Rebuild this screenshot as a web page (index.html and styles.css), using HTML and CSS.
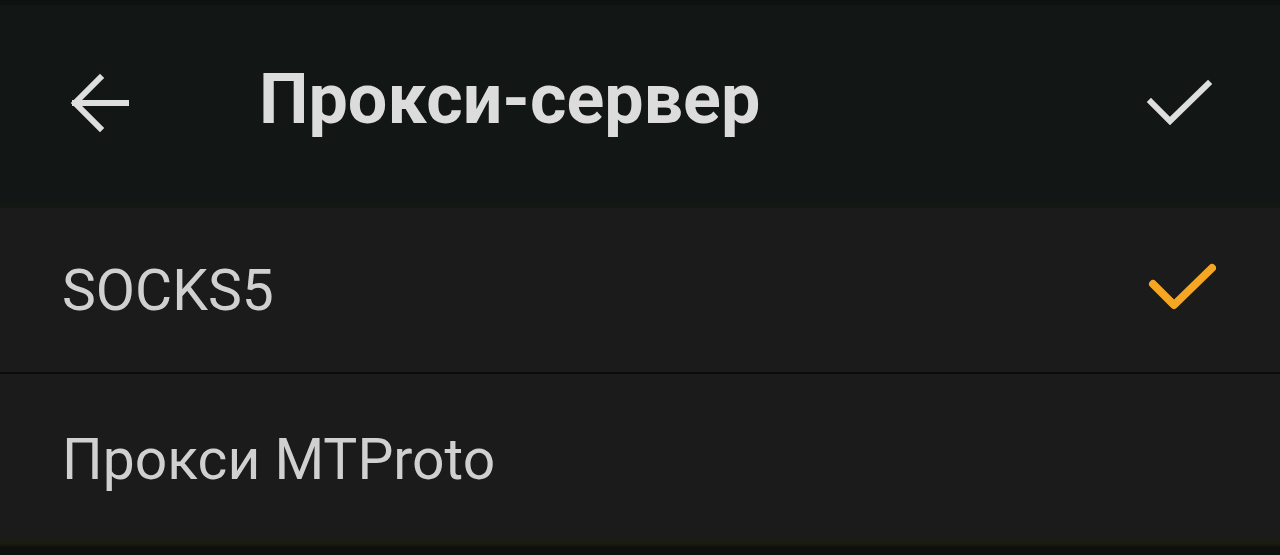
FILE: index.html
```html
<!DOCTYPE html>
<html lang="ru">
<head>
    <meta charset="UTF-8">
    <meta name="viewport" content="width=device-width, initial-scale=1.0">
    <title>Прокси-сервер</title>
    <link rel="stylesheet" href="styles.css">
</head>
<body>
    <div class="status-strip"></div>
    <header class="toolbar">
        <button class="icon-btn back" aria-label="Назад">
            <svg width="60" height="60" viewBox="0 0 60 60">
                <path d="M57 30H6M31 5L6 30l25 25" fill="none" stroke="#dedede" stroke-width="6" stroke-linecap="square"/>
            </svg>
        </button>
        <h1 class="title">Прокси-сервер</h1>
        <button class="icon-btn done" aria-label="Готово">
            <svg width="66" height="50" viewBox="0 0 66 50">
                <path d="M5 24l19 19L62 6" fill="none" stroke="#dedede" stroke-width="6" stroke-linecap="square"/>
            </svg>
        </button>
    </header>

    <ul class="options">
        <li class="option selected">
            <span class="option-label">SOCKS5</span>
            <svg class="tick" width="68" height="52" viewBox="0 0 68 52">
                <path d="M5 22l21 21L64 6" fill="none" stroke="#f5a623" stroke-width="8" stroke-linecap="round" stroke-linejoin="round"/>
            </svg>
        </li>
        <li class="option">
            <span class="option-label">Прокси MTProto</span>
        </li>
    </ul>
    <div class="nav-strip"></div>
</body>
</html>
```

FILE: styles.css
```css
body {
    margin: 0;
    height: 555px;
    overflow: hidden;
    background-color: #1b1b1b;
    font-family: Roboto, "Liberation Sans", sans-serif;
}
.status-strip {
    height: 5px;
    background-color: #0d1211;
}
.toolbar {
    height: 203px;
    display: flex;
    align-items: center;
    background: linear-gradient(#121716 0, #121716 196px, #151712 203px);
}
.icon-btn {
    background: none;
    border: none;
    padding: 0;
    display: flex;
    align-items: center;
    justify-content: center;
    cursor: pointer;
}
.back {
    margin-left: 69px;
    margin-top: -7px;
}
.title {
    margin: -16px 0 0 130px;
    flex: 1;
    font-size: 70px;
    font-weight: bold;
    color: #dcdcdc;
}
.done {
    margin-right: 68px;
    margin-top: -8px;
}
.options {
    list-style: none;
    margin: 0;
    padding: 0;
}
.option {
    height: 164px;
    display: flex;
    align-items: center;
    justify-content: space-between;
    padding: 0 64px 0 62px;
    background-color: #1b1b1b;
}
.option + .option {
    border-top: 2px solid #0b0b0b;
    padding-top: 6px;
    height: 158px;
}
.option-label {
    font-size: 57px;
    color: #d0d0d0;
}
.tick {
    margin-top: -4px;
}
.nav-strip {
    height: 17px;
    background: linear-gradient(#1a1c19 0, #1c1b10 6px, #0d100c 9px);
}
```
